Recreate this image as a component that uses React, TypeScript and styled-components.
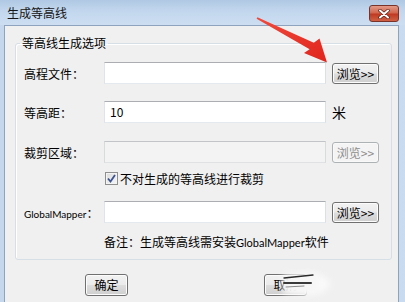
import React from "react";
import styled, { createGlobalStyle } from "styled-components";

const GlobalStyle = createGlobalStyle`
  html, body {
    margin: 0;
    padding: 0;
    background: #fff;
  }
  body {
    font-family: "Noto Sans CJK SC", "Noto Sans", sans-serif;
    font-size: 12px;
    color: #000;
  }
`;

const Window = styled.div`
  position: relative;
  width: 405px;
  height: 302px;
  overflow: hidden;
  display: flex;
  flex-direction: column;
  background: linear-gradient(90deg, #c4d7ed 0%, #bcd2ea 60%, #c9dbef 100%);
`;

const TitleBar = styled.div`
  height: 25px;
  flex: 0 0 25px;
  display: flex;
  justify-content: space-between;
  align-items: flex-start;
  padding: 0 6px 0 7px;
  background: linear-gradient(180deg, #b0c8e4 0%, #c1d6ed 40%, #cddef1 100%);
`;

const Title = styled.div`
  font-size: 12px;
  line-height: 25px;
  color: #151515;
`;

const CloseButton = styled.div`
  margin-top: 5px;
  width: 30px;
  height: 17px;
  box-sizing: border-box;
  border: 1px solid #7a3328;
  border-radius: 3px;
  background: linear-gradient(180deg, #e39a88 0%, #d2674f 45%, #bf3a22 55%, #cf5f43 100%);
  display: flex;
  align-items: center;
  justify-content: center;
`;

const Client = styled.div`
  flex: 1;
  margin: 0 6px 0 4px;
  background: #f0f0f0;
  border: 1px solid #8ea3bd;
  border-bottom: none;
  padding: 9px 6px 0 10px;
`;

const Group = styled.fieldset`
  margin: 0;
  padding: 11px 0 8px 6px;
  border: 1px solid #d5dfe5;
  border-radius: 3px;
  box-shadow: inset 1px 1px 0 #fff;
  min-width: 0;
`;

const Legend = styled.legend`
  font-size: 12px;
  line-height: 16px;
  padding: 0 2px;
  margin-left: -2px;
  color: #000;
`;

const FieldRow = styled.div<{ $top?: number }>`
  display: grid;
  grid-template-columns: 82px 222px auto;
  align-items: center;
  height: 22px;
  margin-top: ${(p) => p.$top ?? 0}px;
`;

const Label = styled.span`
  font-size: 12px;
  padding-left: 2px;
  white-space: nowrap;
`;

const Latin = styled.span<{ $size?: number }>`
  font-family: Lato, "Noto Sans", sans-serif;
  font-size: ${(p) => p.$size ?? 11}px;
`;

const TextBox = styled.div<{ $disabled?: boolean }>`
  height: 22px;
  box-sizing: border-box;
  border: 1px solid;
  border-color: ${(p) =>
    p.$disabled ? "#c2c4c7 #d9dadc #dfe1e3 #d9dadc" : "#abadb3 #dbdfe6 #e3e9ef #e2e3ea"};
  background: ${(p) => (p.$disabled ? "#f3f3f3" : "#fff")};
  padding-left: 5px;
  font-size: 12px;
  line-height: 20px;
`;

const BrowseButton = styled.div<{ $disabled?: boolean }>`
  width: 47px;
  height: 21px;
  margin-left: 6px;
  box-sizing: border-box;
  border: 1px solid ${(p) => (p.$disabled ? "#adb2b5" : "#707070")};
  border-radius: 3px;
  background: ${(p) =>
    p.$disabled
      ? "#f4f4f4"
      : "linear-gradient(180deg, #f2f2f2 0%, #ebebeb 48%, #dddddd 52%, #cfcfcf 100%)"};
  box-shadow: inset 0 0 0 1px ${(p) => (p.$disabled ? "#f9f9f9" : "#fcfcfc")};
  color: ${(p) => (p.$disabled ? "#8d8d8d" : "#000")};
  font-size: 12px;
  line-height: 19px;
  text-align: center;
  white-space: nowrap;
`;

const Unit = styled.span`
  font-size: 14px;
  padding-left: 6px;
`;

const CheckRow = styled.div`
  display: grid;
  grid-template-columns: 82px auto;
  align-items: center;
  height: 14px;
  margin-top: 7px;
`;

const CheckLabel = styled.label`
  grid-column: 2;
  display: flex;
  align-items: center;
  gap: 2px;
  padding-left: 1px;
  font-size: 12px;
  white-space: nowrap;
`;

const CheckBox = styled.span`
  width: 13px;
  height: 13px;
  box-sizing: border-box;
  border: 1px solid #8f8f8f;
  background: linear-gradient(135deg, #dcdcdc 0%, #f6f6f6 100%);
  box-shadow: inset 0 0 0 1px #f4f4f4;
  display: flex;
  align-items: center;
  justify-content: center;
`;

const Note = styled.div`
  display: grid;
  grid-template-columns: 82px auto;
  margin-top: 11px;
  font-size: 12px;
  line-height: 16px;
  & > span {
    grid-column: 2;
    white-space: nowrap;
  }
`;

const Footer = styled.div`
  display: flex;
  gap: 136px;
  margin-top: 14px;
  padding-left: 70px;
`;

const DialogButton = styled.div`
  width: 43px;
  height: 22px;
  box-sizing: border-box;
  border: 1px solid #707070;
  border-radius: 3px;
  background: linear-gradient(180deg, #f2f2f2 0%, #ebebeb 48%, #dddddd 52%, #cfcfcf 100%);
  box-shadow: inset 0 0 0 1px #fcfcfc;
  font-size: 12px;
  line-height: 20px;
  text-align: center;
`;

const Overlay = styled.svg`
  position: absolute;
  left: 0;
  top: 0;
  pointer-events: none;
`;

const App = () => {
  return (
    <>
      <GlobalStyle />
      <Window>
        <TitleBar>
          <Title>生成等高线</Title>
          <CloseButton>
            <svg width="12" height="10" viewBox="0 0 12 10">
              <path d="M2 1.5 L10 8.5 M10 1.5 L2 8.5" stroke="#5a1d14" strokeWidth="3.4" strokeLinecap="round" />
              <path d="M2 1.5 L10 8.5 M10 1.5 L2 8.5" stroke="#fff" strokeWidth="2" strokeLinecap="round" />
            </svg>
          </CloseButton>
        </TitleBar>
        <Client>
          <Group>
            <Legend>等高线生成选项</Legend>
            <FieldRow>
              <Label>高程文件：</Label>
              <TextBox />
              <BrowseButton>浏览&gt;&gt;</BrowseButton>
            </FieldRow>
            <FieldRow $top={17}>
              <Label>等高距：</Label>
              <TextBox>10</TextBox>
              <Unit>米</Unit>
            </FieldRow>
            <FieldRow $top={18}>
              <Label>裁剪区域：</Label>
              <TextBox $disabled />
              <BrowseButton $disabled>浏览&gt;&gt;</BrowseButton>
            </FieldRow>
            <CheckRow>
              <CheckLabel>
                <CheckBox>
                  <svg width="9" height="9" viewBox="0 0 9 9">
                    <path d="M1 4.5 L3.5 7.5 L8 1" fill="none" stroke="#3d5291" strokeWidth="1.8" />
                  </svg>
                </CheckBox>
                不对生成的等高线进行裁剪
              </CheckLabel>
            </CheckRow>
            <FieldRow $top={17}>
              <Label>
                <Latin $size={10}>GlobalMapper</Latin>：
              </Label>
              <TextBox />
              <BrowseButton>浏览&gt;&gt;</BrowseButton>
            </FieldRow>
            <Note>
              <span>
                备注：生成等高线需安装<Latin>GlobalMapper</Latin>软件
              </span>
            </Note>
          </Group>
          <Footer>
            <DialogButton>确定</DialogButton>
            <DialogButton>取消</DialogButton>
          </Footer>
        </Client>

        <Overlay width="405" height="302" viewBox="0 0 405 302">
          <defs>
            <linearGradient id="arrowRed" x1="0" y1="0" x2="1" y2="1">
              <stop offset="0" stopColor="#f04a3c" />
              <stop offset="1" stopColor="#e0241c" />
            </linearGradient>
            <filter id="soft" x="-50%" y="-50%" width="200%" height="200%">
              <feGaussianBlur stdDeviation="3" />
            </filter>
            <filter id="softLine" x="-20%" y="-100%" width="140%" height="300%">
              <feGaussianBlur stdDeviation="0.6" />
            </filter>
          </defs>
          <path
            d="M256.6 18.7 L257.4 17.3 L313.8 42.8 L319.5 38.5 L327 62.5 L304 53 L309.6 49.2 Z"
            fill="url(#arrowRed)"
          />
          <ellipse cx="308" cy="284" rx="22" ry="10" fill="#fafafa" filter="url(#soft)" />
          <rect x="283" y="274" width="36" height="20" fill="#f7f7f7" filter="url(#soft)" />
          <g filter="url(#softLine)" fill="none" strokeLinecap="round">
            <path d="M284 278 L313 275" stroke="#2a2a2a" strokeWidth="1.3" />
            <path d="M284 283 L311 283" stroke="#3a3a3a" strokeWidth="2" />
            <path d="M286 287 L304 286" stroke="#8a8a8a" strokeWidth="1" />
          </g>
        </Overlay>
      </Window>
    </>
  );
};

export default App;
